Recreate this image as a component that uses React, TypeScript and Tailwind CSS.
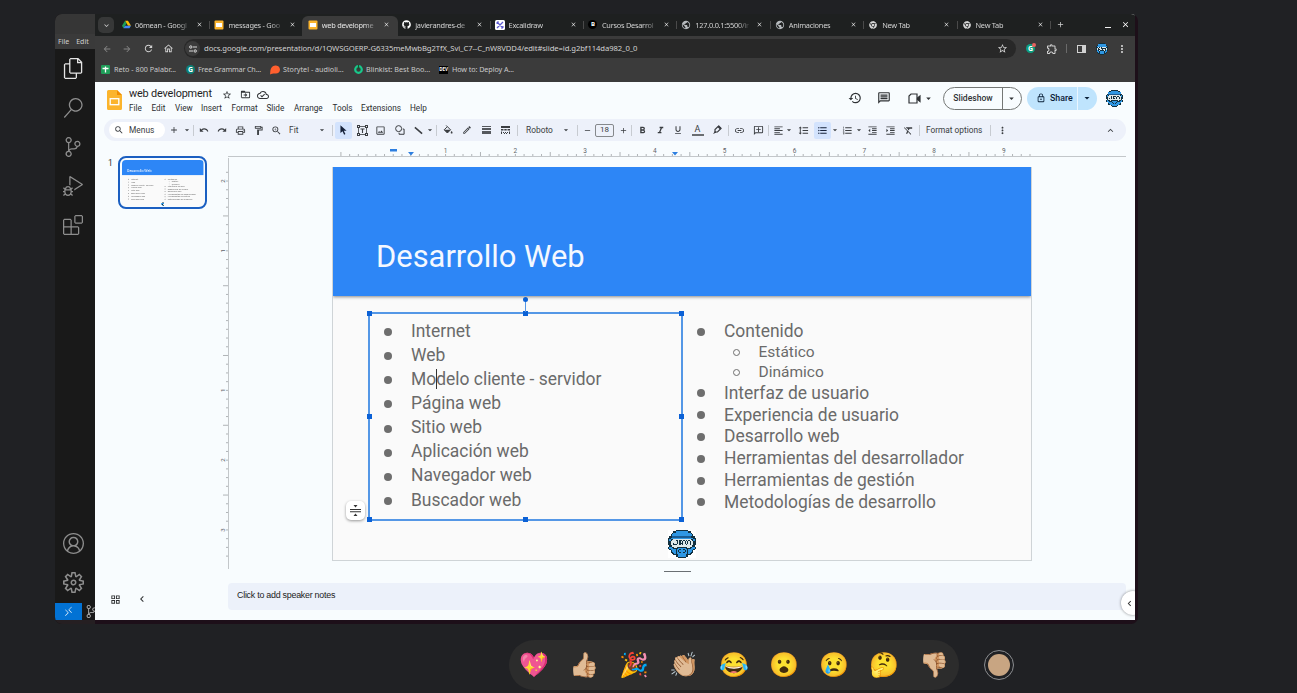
import React from "react";
import {
  MdHistory, MdOutlineComment, MdArrowDropDown, MdSearch, MdAdd, MdRemove,
  MdUndo, MdRedo, MdOutlinePrint, MdOutlineFormatPaint, MdZoomIn, MdOutlineImage,
  MdOutlineEdit, MdFormatBold, MdFormatItalic, MdFormatUnderlined, MdLink,
  MdOutlineAddComment, MdFormatAlignLeft, MdFormatLineSpacing, MdFormatListBulleted,
  MdFormatListNumbered, MdFormatIndentDecrease, MdFormatIndentIncrease, MdFormatClear, MdMoreVert,
  MdKeyboardArrowUp, MdKeyboardArrowDown, MdKeyboardArrowLeft, MdStarOutline, MdDriveFileMoveOutline,
  MdOutlineCloudDone, MdArrowBack, MdArrowForward, MdRefresh, MdOutlineHome, MdClose, MdPublic,
  MdOutlineExtension, MdLockOutline, MdOutlineGridView,
} from "react-icons/md";
import {
  VscFiles, VscSearch, VscSourceControl, VscDebugAlt, VscExtensions, VscAccount, VscSettingsGear, VscRemote,
} from "react-icons/vsc";
import { FaGithub, FaChrome } from "react-icons/fa";

const HELMET = [
  "......kkkkkkkkkk......",
  "....kkbbbbbbbbbbkk....",
  "...kbbbbbbbbbbbbbbk...",
  "..kbbbbbbbbbbbbbbbbk..",
  "..kbbbbbbbbbbbbbbbbk..",
  ".kkdddddddddddddddkkk.",
  "kkbbbbbbbbbbbbbbbbbbkk",
  "kbkkwwwwwwwwwwwwwwkkbk",
  "kbkwwwkkwkkwkwkwkwwkbk",
  "kkwwwwwkwkwkwkwkwkwwkk",
  "kkwwkwwkwkkkwkwkwkwwkk",
  "kkwwkkkwwkwkwwkwwkwwkk",
  ".kkwwwwwwwwwwwwwwwwkk.",
  "kbbkkwwkkkkkkkkwwkkbbk",
  "kbbbkkkkbbbbbbkkkkbbbk",
  ".kbbbbkbbkbbkbbkbbbbk.",
  "..kbbbkbkbbbbkbkbbbk..",
  "..kkbbkbbkbbkbbkbbkk..",
  "...kkbkbbbbbbbbkbkk...",
  "....kkkkbbbbbbkkkk....",
  "......kkbbbbbbkk......",
  "........kkkkkk........",
];
const HELMET_COLORS: Record<string, string> = { k: "#12303f", b: "#2f97e3", d: "#1a5c92", w: "#dfe9ea" };

/* Neighbouring cells of one colour are merged into a single bar. */
function Helmet({ className }: { className: string }) {
  const bars: React.ReactNode[] = [];
  HELMET.forEach((row, y) => {
    for (let x = 0; x < row.length; ) {
      let end = x + 1;
      while (end < row.length && row[end] === row[x]) end++;
      if (row[x] !== ".") {
        bars.push(<rect key={`${x}-${y}`} x={x} y={y} width={end - x} height="1" fill={HELMET_COLORS[row[x]]} />);
      }
      x = end;
    }
  });
  return (
    <svg viewBox="0 0 22 22" className={className} shapeRendering="crispEdges">
      {bars}
    </svg>
  );
}

function SlidesLogo({ className }: { className: string }) {
  return (
    <svg viewBox="0 0 15 20" className={className}>
      <path d="M1.500 0H10l5 5v13.500a1.500 1.500 0 0 1-1.500 1.500h-12A1.500 1.500 0 0 1 0 18.500v-17A1.500 1.500 0 0 1 1.500 0z" fill="#fbb42c" />
      <path d="M10 0l5 5h-5z" fill="#f08c00" />
      <rect x="3.200" y="8.700" width="8.600" height="6" fill="none" stroke="#fff" strokeWidth="1.300" />
    </svg>
  );
}

const slidesFav = (
  <svg viewBox="0 0 10 10" className="size-[10px]">
    <rect x="0.500" y="0.500" width="9" height="9" rx="1" fill="#fbb42c" />
    <rect x="2" y="3" width="6" height="4" fill="#fff" />
  </svg>
);
const driveFav = (
  <svg viewBox="0 0 24 22" className="size-[9px]">
    <path d="M8 1h8l8 13h-8z" fill="#fbbc04" />
    <path d="M8 1L0 14l4 7 8-13z" fill="#1e9d57" />
    <path d="M8 14h16l-4 7H4z" fill="#4285f4" />
  </svg>
);
const excaliFav = (
  <svg viewBox="0 0 10 10" className="size-[10px]">
    <rect width="10" height="10" rx="1.500" fill="#fff" />
    <path d="M2 2l6 6M8 2L2 8M1.500 3.500l2-2M6.500 8.500l2-2" stroke="#5b57d1" strokeWidth="1.300" />
  </svg>
);
const cursosFav = (
  <span className="flex size-[9px] items-center justify-center rounded-full bg-black text-[6px] font-bold text-white">B</span>
);
const globeFav = <MdPublic className="size-[10px] text-[#b6babd]" />;
const chromeFav = <FaChrome className="size-[8px] text-[#d5d5d5]" />;

const TABS: { label: string; icon: React.ReactNode; active?: boolean; line?: boolean }[] = [
  { label: "06mean - Googl", icon: driveFav, line: true },
  { label: "messages - Goo", icon: slidesFav },
  { label: "web developme", icon: slidesFav, active: true },
  { label: "javierandres-de", icon: <FaGithub className="size-[9px] text-white" />, line: true },
  { label: "Excalidraw", icon: excaliFav, line: true },
  { label: "Cursos Desarrol", icon: cursosFav, line: true },
  { label: "127.0.0.1:5500/ir", icon: globeFav, line: true },
  { label: "Animaciones", icon: globeFav, line: true },
  { label: "New Tab", icon: chromeFav, line: true },
  { label: "New Tab", icon: chromeFav, line: true },
];

function TabStrip() {
  return (
    <div className="flex h-[22px] items-center bg-[#1e2020] text-[#d2d2d2]">
      <div className="ml-[3px] flex size-[16px] items-center justify-center rounded-[5px] bg-[#373838]">
        <MdKeyboardArrowDown className="size-[9px]" />
      </div>
      <div className="ml-[4px] flex h-full items-end">
        {TABS.map((t, i) => (
          <div
            key={i}
            className={
              t.active
                ? "-ml-[3px] flex h-[20px] w-[96.400px] items-center rounded-t-[6px] bg-[#3b3b3b] pb-[3px] pl-[3px] text-[#e3e3e3]"
                : "flex h-[20px] w-[93.400px] items-center pb-[3px]"
            }
          >
            <span className="ml-[3px] flex w-[10px] justify-center">{t.icon}</span>
            <span className="ml-[4px] w-[57px] text-[7.400px] leading-[12px] tracking-[-0.260px] whitespace-nowrap [mask-image:linear-gradient(to_right,black_75%,transparent_98%)]">
              {t.label}
            </span>
            <MdClose className="ml-[4px] size-[7px] text-[#e0e0e0]" />
            {t.line && <span className="mr-px ml-auto h-[8px] w-px bg-[#4a4a4a]" />}
          </div>
        ))}
      </div>
      <MdAdd className="-mt-px ml-[4px] size-[9px]" />
      <span className="mt-[4px] ml-[40px] h-px w-[6px] bg-[#f0f0f0]" />
      <MdClose className="-mt-px ml-[10px] size-[9px] text-white" />
    </div>
  );
}

function AddressRow() {
  return (
    <div className="flex h-[25px] items-center bg-[#3b3b3b] text-[#d2d2d2]">
      <MdArrowBack className="ml-[7px] size-[10px] text-[#858585]" />
      <MdArrowForward className="ml-[10px] size-[10px] text-[#858585]" />
      <MdRefresh className="ml-[11px] size-[11px]" />
      <MdOutlineHome className="ml-[9px] size-[11px]" />
      <div className="ml-[10px] flex h-[19px] w-[832px] items-center rounded-full bg-[#282828]">
        <span className="ml-px flex size-[15px] items-center justify-center rounded-full bg-[#3b3b3b]">
          <svg viewBox="0 0 8 8" className="size-[8px]" fill="none" stroke="#dadada" strokeWidth="1">
            <circle cx="1.800" cy="2" r="1.200" />
            <path d="M4 2h4M0 6h4" />
            <circle cx="6.200" cy="6" r="1.200" />
          </svg>
        </span>
        <span className="ml-[4px] text-[7.700px] leading-none tracking-[-0.095px] whitespace-nowrap">
          docs.google.com/presentation/d/1QWSGOERP-G6335meMwbBg2TfX_Svi_C7--C_nW8VDD4/edit#slide=id.g2bf114da982_0_0
        </span>
        <MdStarOutline className="mr-[8px] ml-auto size-[11px]" />
      </div>
      <span className="relative ml-[10px] flex size-[9px] items-center justify-center rounded-full bg-[#0d9e80] text-[7px] leading-none font-bold text-white">
        G
        <span className="absolute -top-px -right-px size-[4px] rounded-full bg-[#e9625f]" />
      </span>
      <MdOutlineExtension className="ml-[11px] size-[12px]" />
      <span className="ml-[8px] h-[9px] w-px bg-[#6a6a6a]" />
      <svg viewBox="0 0 9 8" className="ml-[10px] h-[8px] w-[9px]">
        <rect x="0.500" y="0.500" width="8" height="7" fill="none" stroke="#d2d2d2" />
        <rect x="5" y="0.500" width="3.500" height="7" fill="#d2d2d2" />
      </svg>
      <Helmet className="ml-[10px] size-[12px]" />
      <MdMoreVert className="ml-[8px] size-[12px]" />
    </div>
  );
}

function Bookmarks() {
  const text = "text-[7.200px] leading-none whitespace-nowrap";
  return (
    <div className="flex h-[21px] items-center bg-[#3b3b3b] pb-[4px] text-[#cacaca]">
      <div className="flex w-[85px] items-center pl-[6px]">
        <svg viewBox="0 0 9 9" className="size-[9px]">
          <rect width="9" height="9" rx="1" fill="#1f9e59" />
          <path d="M1.500 3.500h6M4.500 1.500v6" stroke="#fff" strokeWidth="1.300" />
        </svg>
        <span className={`${text} ml-[4px]`}>Reto - 800 Palabr...</span>
      </div>
      <div className="flex w-[85px] items-center pl-[6px]">
        <span className="flex size-[9px] items-center justify-center rounded-full bg-[#0b7f76] text-[7px] leading-none font-bold text-white">G</span>
        <span className={`${text} ml-[3px] tracking-[-0.150px]`}>Free Grammar Ch...</span>
      </div>
      <div className="flex w-[84px] items-center pl-[5px]">
        <svg viewBox="0 0 10 10" className="size-[10px]">
          <path d="M0 9.500C.5 7 0 5.500 1 3.500 2 1.200 4 .3 6 .5c2.500.2 4 2 4 4.200C10 7 8 8.800 5.500 8.600 3.500 8.500 2 8.600 0 9.500z" fill="#ff5f2e" />
        </svg>
        <span className={`${text} ml-[3px]`}>Storytel - audioli...</span>
      </div>
      <div className="flex w-[84px] items-center pl-[5px]">
        <svg viewBox="0 0 9 9" className="size-[9px]">
          <circle cx="4.500" cy="4.500" r="3.300" fill="none" stroke="#18c98b" strokeWidth="2.200" />
          <path d="M4.500 0v4" stroke="#14532d" strokeWidth="1.200" />
        </svg>
        <span className={`${text} ml-[3px]`}>Blinkist: Best Boo...</span>
      </div>
      <div className="flex items-center pl-[6px]">
        <span className="flex h-[8px] w-[9px] items-center justify-center bg-black text-[4.500px] font-bold text-white">DEV</span>
        <span className={`${text} ml-[4px] tracking-[-0.080px]`}>How to: Deploy A...</span>
      </div>
    </div>
  );
}

function DocsHeader() {
  return (
    <div className="flex h-[37px] items-start text-[#303336]">
      <SlidesLogo className="mt-[8px] ml-[12px] h-[20px] w-[15px]" />
      <div className="ml-[7px] pt-[6px]">
        <div className="flex h-[13px] items-center">
          <span className="w-[93px] text-[10.900px] leading-none tracking-[-0.180px] whitespace-nowrap text-[#1f1f1f]">web development</span>
          <MdStarOutline className="size-[10px]" />
          <MdDriveFileMoveOutline className="ml-[8px] size-[11px]" />
          <MdOutlineCloudDone className="ml-[6px] size-[12px]" />
        </div>
        <div className="mt-px flex h-[12px] items-center text-[8.200px] leading-none text-[#2b2d30]">
          <span className="w-[22.500px]">File</span>
          <span className="w-[23.500px]">Edit</span>
          <span className="w-[26px]">View</span>
          <span className="w-[30.500px]">Insert</span>
          <span className="w-[35px]">Format</span>
          <span className="w-[27.500px]">Slide</span>
          <span className="w-[38.500px]">Arrange</span>
          <span className="w-[28.500px]">Tools</span>
          <span className="w-[49px]">Extensions</span>
          <span>Help</span>
        </div>
      </div>
      <div className="mt-[4px] mr-[12px] ml-auto flex h-[24px] items-center">
        <MdHistory className="size-[14px]" />
        <MdOutlineComment className="ml-[15px] size-[14px] -scale-x-100" />
        <svg viewBox="0 0 13 11" className="ml-[17px] h-[11px] w-[13px]" fill="none" stroke="#303336" strokeWidth="1.200">
          <path d="M3 1h6v9H1V3z" />
          <path d="M9.500 5l2.500-2v5.500L9.500 6.500z" fill="#303336" />
        </svg>
        <MdArrowDropDown className="ml-[2px] size-[11px]" />
        <div className="ml-[9px] flex h-[23px] w-[79px] items-center rounded-full border border-[#747775]">
          <span className="flex w-[58px] justify-center text-[8.600px] leading-none font-medium">Slideshow</span>
          <span className="h-full w-px bg-[#747775]" />
          <MdArrowDropDown className="ml-[3px] size-[11px]" />
        </div>
        <div className="ml-[5px] flex h-[23px] w-[70px] items-center rounded-full bg-[#bfe4fd] text-[#0b2038]">
          <MdLockOutline className="ml-[9px] size-[10px]" />
          <span className="ml-[4px] w-[27px] text-[8.800px] leading-none font-medium">Share</span>
          <span className="h-full w-px bg-[#eaf6ff]" />
          <MdArrowDropDown className="ml-[3px] size-[12px]" />
        </div>
        <Helmet className="ml-[9px] size-[17px]" />
      </div>
    </div>
  );
}

function Caret({ className }: { className: string }) {
  return (
    <span className={`flex h-full shrink-0 items-center justify-center ${className}`}>
      <MdArrowDropDown className="size-[10px] shrink-0" />
    </span>
  );
}
function Sep({ className }: { className: string }) {
  return <span className={`h-[11px] w-px shrink-0 bg-[#c7cbd1] ${className}`} />;
}
function I({ className, children }: { className: string; children: React.ReactNode }) {
  return <span className={`flex h-full w-[12px] shrink-0 items-center justify-center text-[11px] ${className}`}>{children}</span>;
}

function Toolbar() {
  return (
    <div className="mr-[9px] ml-[9px] flex h-[22px] shrink-0 items-center rounded-full bg-[#edf1fa] text-[#3a3d41]">
      <div className="ml-[5px] flex h-[16px] w-[56px] shrink-0 items-center rounded-full bg-white">
        <MdSearch className="ml-[5px] size-[10px]" />
        <span className="ml-[5px] text-[8.400px] leading-none">Menus</span>
      </div>
      <MdAdd className="ml-[4px] size-[10px] shrink-0" />
      <Caret className="ml-[4px] w-[8px]" />
      <Sep className="ml-[2px]" />
      <I className="ml-[4px]"><MdUndo className="size-[10px]" /></I>
      <I className="ml-[6px]"><MdRedo className="size-[10px]" /></I>
      <I className="ml-[6px]"><MdOutlinePrint /></I>
      <I className="ml-[6px]"><MdOutlineFormatPaint /></I>
      <I className="ml-[6px]"><MdZoomIn /></I>
      <span className="ml-[7px] w-[10px] shrink-0 text-[8.400px] leading-none">Fit</span>
      <Caret className="ml-[19px] w-[8px]" />
      <Sep className="ml-[6px]" />
      <span className="ml-[2px] flex h-[17px] w-[17px] shrink-0 items-center justify-center rounded-[2px] bg-[#d3e3fd]">
        <svg viewBox="0 0 8 11" className="h-[10px] w-[7px]">
          <path d="M0.500 0l7 6.300H4.300l1.900 3.700-1.500.8L2.900 7 .5 9z" fill="#16223a" />
        </svg>
      </span>
      <I className="ml-[4px]">
        <svg viewBox="0 0 11 11" className="size-[11px]" fill="none" stroke="#3a3d41">
          <rect x="1.500" y="1.500" width="8" height="8" strokeWidth="0.800" />
          <path d="M3.500 4h4M5.500 4v4" strokeWidth="1.100" />
          <path d="M0 0h3v3H0zM8 0h3v3H8zM0 8h3v3H0zM8 8h3v3H8z" fill="#3a3d41" stroke="none" />
          <path d="M1 1h1v1H1zM9 1h1v1H9zM1 9h1v1H1zM9 9h1v1H9z" fill="#edf1fa" stroke="none" />
        </svg>
      </I>
      <I className="ml-[6px]"><MdOutlineImage /></I>
      <I className="ml-[8px]">
        <svg viewBox="0 0 11 11" className="size-[10px]" fill="none" stroke="#3a3d41" strokeWidth="1.100">
          <circle cx="4" cy="4" r="3.300" />
          <path d="M8.500 4.500H10v5.700H4.500V8.500" />
        </svg>
      </I>
      <I className="ml-[6px]">
        <svg viewBox="0 0 10 10" className="size-[9px]"><path d="M1 1.500l8 7" stroke="#3a3d41" strokeWidth="1.700" /></svg>
      </I>
      <Caret className="ml-[2px] w-[8px]" />
      <Sep className="ml-[2px]" />
      <I className="ml-[5px]">
        <svg viewBox="0 0 11 11" className="size-[10px]">
          <path d="M3.500.5l4.800 4.800L4.800 8.800 1.300 5.300l3-3" fill="none" stroke="#3a3d41" strokeWidth="1.100" />
          <path d="M1.300 5.300h7L4.800 8.800zM9.500 6.500c.8 1 1 1.400 1 1.900a1 1 0 0 1-2 0c0-.5.3-.9 1-1.900z" fill="#3a3d41" />
        </svg>
      </I>
      <I className="ml-[7px]"><MdOutlineEdit className="size-[10px]" /></I>
      <I className="ml-[7px]">
        <svg viewBox="0 0 9 8" className="h-[8px] w-[9px]" fill="#3a3d41">
          <path d="M0 0h9v1H0zM0 2h9v2H0zM0 5h9v3H0z" opacity="0.850" />
        </svg>
      </I>
      <I className="ml-[7px]">
        <svg viewBox="0 0 9 8" className="h-[8px] w-[9px]" fill="#3a3d41">
          <path d="M0 0h9v2H0zM0 3h2.500v1.500H0zM3.300 3h2.400v1.500H3.300zM6.500 3H9v1.500H6.500zM0 5.500h1V8H0zM2 6h1v1H2zM4 6h1v1H4zM6 6h1v1H6zM8 5.500h1V8H8zM3 7h1v1H3zM5 7h1v1H5z" />
        </svg>
      </I>
      <Sep className="ml-[6px]" />
      <span className="ml-[8px] w-[27px] shrink-0 text-[8.400px] leading-none">Roboto</span>
      <Caret className="ml-[9px] w-[8px]" />
      <Sep className="ml-[7px]" />
      <MdRemove className="ml-[5px] size-[9px] shrink-0" />
      <span className="ml-[3px] flex h-[13px] w-[19px] shrink-0 items-center justify-center rounded-[2px] border border-[#85888c] text-[8px] leading-none">18</span>
      <MdAdd className="ml-[5px] size-[9px] shrink-0" />
      <Sep className="ml-[3px]" />
      <I className="ml-[4px]"><MdFormatBold /></I>
      <I className="ml-[6px]"><MdFormatItalic /></I>
      <I className="ml-[6px]"><MdFormatUnderlined className="size-[10px]" /></I>
      <span className="ml-[7px] flex w-[13px] shrink-0 flex-col items-center text-[9px] leading-[9px]">
        A
        <span className="h-[2px] w-[12px] bg-[#6a6d71]" />
      </span>
      <I className="ml-[7px]">
        <svg viewBox="0 0 10 10" className="size-[10px]" fill="none" stroke="#3a3d41" strokeWidth="1.200">
          <path d="M6.500 1L9 3.500 5.500 7H3V4.500z" />
          <path d="M5.500 2L8 4.500l1.500-1.500L7 .5zM1 9l2-3 1.500 1.500z" fill="#3a3d41" stroke="none" />
        </svg>
      </I>
      <Sep className="ml-[5px]" />
      <I className="ml-[4px]"><MdLink /></I>
      <I className="ml-[7px]"><MdOutlineAddComment className="-scale-x-100" /></I>
      <Sep className="ml-[4px]" />
      <I className="ml-[3px]"><MdFormatAlignLeft /></I>
      <Caret className="ml-px w-[8px]" />
      <I className="ml-[4px]"><MdFormatLineSpacing /></I>
      <span className="ml-[5px] flex h-[17px] w-[17px] shrink-0 items-center justify-center rounded-[2px] bg-[#d3e3fd] text-[11px] text-[#16223a]">
        <MdFormatListBulleted />
      </span>
      <Caret className="w-[7px]" />
      <I className="ml-[3px]"><MdFormatListNumbered /></I>
      <Caret className="ml-[2px] w-[8px]" />
      <I className="ml-[3px]"><MdFormatIndentDecrease /></I>
      <I className="ml-[6px]"><MdFormatIndentIncrease /></I>
      <I className="ml-[6px]"><MdFormatClear /></I>
      <Sep className="ml-[5px]" />
      <span className="ml-[6px] w-[57px] shrink-0 text-[8.300px] leading-none whitespace-nowrap">Format options</span>
      <Sep className="ml-[7px]" />
      <I className="ml-[5px]"><MdMoreVert /></I>
      <I className="mr-[10px] ml-auto"><MdKeyboardArrowUp /></I>
    </div>
  );
}

const UNIT = 69.78;

/* Horizontal ruler: the origin of the scale lies 155.8px right of the svg's left edge. */
function HorizontalRuler() {
  const ticks: React.ReactNode[] = [];
  for (let i = -4; i <= 75; i++) {
    const x = 155.8 + (i * UNIT) / 8;
    if (x > 812) break;
    ticks.push(<path key={i} d={`M${x} ${i % 4 === 0 && i % 8 !== 0 ? 11 : 13}V15`} stroke="#9da1a5" strokeWidth="0.800" />);
  }
  return (
    <svg viewBox="0 0 906 17" className="h-[17px] w-[906px] shrink-0">
      <path d="M8 15.500H906" stroke="#c3c7ca" />
      {ticks}
      {[1, 2, 3, 4, 5, 6, 7, 8, 9].map((n) => (
        <text key={n} x={155.8 + n * UNIT} y="12" textAnchor="middle" fontSize="6.500" fill="#5f6368">{n}</text>
      ))}
      <rect x="170" y="8" width="7" height="2.500" fill="#2d7fe0" />
      <path d="M188 11h6l-3 3.500zM452 11h6l-3 3.500z" fill="#2d7fe0" />
    </svg>
  );
}

function VerticalRuler() {
  const ticks: React.ReactNode[] = [];
  for (let i = -17; i <= 27; i++) {
    const y = 162.6 + (i * UNIT) / 8;
    ticks.push(<path key={i} d={`M${i % 4 === 0 && i % 8 !== 0 ? 3 : 6} ${y}H8`} stroke="#9da1a5" strokeWidth="0.800" />);
  }
  return (
    <svg viewBox="0 0 9 411" className="h-[411px] w-[9px] shrink-0">
      <path d="M8.500 0V411" stroke="#c3c7ca" />
      {ticks}
      {[-2, -1, 1, 2, 3].map((n) => (
        <text key={n} transform={`translate(4.500 ${162.6 + n * UNIT}) rotate(-90)`} textAnchor="middle" fontSize="6" fill="#5f6368">
          {Math.abs(n)}
        </text>
      ))}
    </svg>
  );
}

const LEFT = ["Internet", "Web", "Modelo cliente - servidor", "Página web", "Sitio web", "Aplicación web", "Navegador web", "Buscador web"];
const RIGHT = ["Interfaz de usuario", "Experiencia de usuario", "Desarrollo web", "Herramientas del desarrollador", "Herramientas de gestión", "Metodologías de desarrollo"];

function RightRow({ text }: { text: string }) {
  return (
    <li className="flex h-[21.800px] items-center">
      <span className="size-[8px] rounded-full bg-[#6e6e6e]" />
      <span className="ml-[19px]">{text}</span>
    </li>
  );
}

function SlideContent() {
  return (
    <div className="relative h-[393px] w-[698px] overflow-hidden bg-[#fafafa] text-[#6a6a6a]">
      <div className="h-[128.500px] bg-[#2d86f6] pt-[71px] pl-[43px] shadow-[0_1px_3px_rgba(0,0,0,0.450)]">
        <span className="text-[30.900px] leading-[38px] whitespace-nowrap text-[#f4f8ff]">Desarrollo Web</span>
      </div>
      <ul className="absolute top-[152.600px] left-[51px] text-[17.450px] leading-none whitespace-nowrap">
        {LEFT.map((t) => (
          <li key={t} className="flex h-[24.100px] items-center">
            <span className="mt-px size-[8px] rounded-full bg-[#6e6e6e]" />
            <span className="ml-[19px]">{t}</span>
          </li>
        ))}
      </ul>
      <ul className="absolute top-[154.200px] left-[364px] text-[17.450px] leading-none whitespace-nowrap">
        <RightRow text="Contenido" />
        {["Estático", "Dinámico"].map((t) => (
          <li key={t} className="flex h-[19.800px] items-center text-[15.500px]">
            <span className="ml-[36px] size-[7px] rounded-full border border-[#6e6e6e]" />
            <span className="ml-[18.500px]">{t}</span>
          </li>
        ))}
        {RIGHT.map((t) => <RightRow key={t} text={t} />)}
      </ul>
      <div className="absolute top-[363px] left-[335px] bg-white"><Helmet className="size-[28px]" /></div>
    </div>
  );
}

function Selection() {
  const h = "absolute size-[5px] bg-[#0b61d6]";
  return (
    <div className="absolute top-[145px] left-[35px] h-[209px] w-[315px] border-2 border-[#5497e6]">
      <span className={`${h} -top-[3px] -left-[3px]`} />
      <span className={`${h} -top-[3px] left-[153px]`} />
      <span className={`${h} -top-[3px] -right-[3px]`} />
      <span className={`${h} top-[100px] -left-[3px]`} />
      <span className={`${h} top-[100px] -right-[3px]`} />
      <span className={`${h} -bottom-[3px] -left-[3px]`} />
      <span className={`${h} -bottom-[3px] left-[153px]`} />
      <span className={`${h} -right-[3px] -bottom-[3px]`} />
      <span className="absolute -top-[14px] left-[155px] h-[12px] w-px bg-[#5497e6]" />
      <span className="absolute -top-[17px] left-[153px] size-[5px] rounded-full bg-[#0b61d6]" />
      <span className="absolute top-[55px] left-[66px] h-[20px] w-px bg-[#333]" />
    </div>
  );
}

function Editor() {
  return (
    <div className="relative flex h-[479px] overflow-hidden">
      <div className="flex w-[125px] shrink-0 flex-col">
        <div className="mt-[15px] flex">
          <span className="mt-[2px] ml-[13px] w-[9px] text-[8.500px] leading-[10px] text-[#333]">1</span>
          <div className="ml-px h-[53px] w-[89px] rounded-[8px] border-2 border-[#1b5fc1] p-[2px]">
            <div className="h-[46px] w-[82px] overflow-hidden rounded-[4px]">
              <div className="h-[393px] w-[698px] origin-top-left scale-[0.117]"><SlideContent /></div>
            </div>
          </div>
        </div>
        <div className="mt-auto mb-[15px] flex items-center text-[#2d2f31]">
          <MdOutlineGridView className="ml-[15px] size-[11px]" />
          <MdKeyboardArrowLeft className="ml-[15px] size-[12px]" />
        </div>
      </div>
      <div className="flex flex-col">
        <HorizontalRuler />
        <div className="flex h-[411px]">
          <VerticalRuler />
          <div className="pt-[9px] pl-[103px]">
            <div className="relative border border-t-0 border-[#cfd4d7]">
              <SlideContent />
              <Selection />
              <span className="absolute top-[334px] left-[13px] flex size-[19px] items-center justify-center rounded-[5px] bg-white shadow-[0_1px_3px_rgba(0,0,0,0.400)]">
                <svg viewBox="0 0 11 11" className="size-[11px]" fill="#333">
                  <path d="M3.500 0h4l-2 2.500zM3.500 11h4l-2-2.500zM0 4h11v1H0zM0 6.200h11v1H0z" />
                </svg>
              </span>
            </div>
            <div className="mt-[10px] ml-[332px] h-px w-[27px] bg-[#6a6f73]" />
          </div>
        </div>
        <div className="mt-[14px] ml-[8px] flex h-[27px] w-[898px] items-center rounded-[4px] bg-[#ecf1fa] pb-[3px] pl-[9px] font-['Liberation_Sans',sans-serif] text-[8.900px] leading-none tracking-[-0.250px] text-[#222]">
          Click to add speaker notes
        </div>
      </div>
      <div className="absolute top-[450px] left-[1026px] flex size-[24px] items-center rounded-full bg-white pl-[3px] shadow-[0_0_3px_rgba(0,0,0,0.450)]">
        <MdKeyboardArrowLeft className="size-[11px] text-[#333]" />
      </div>
    </div>
  );
}

function CodeSidebar() {
  return (
    <div className="flex w-[40px] shrink-0 flex-col overflow-hidden bg-[#191919] text-[#8d8d8d]">
      <div className="h-[20px] bg-[#363636]" />
      <div className="flex h-[15px] items-center gap-[7px] bg-[#3a3a3a] pl-[3px] font-['Noto_Sans',sans-serif] text-[7px] leading-none text-[#d0d0d0]">
        <span>File</span>
        <span>Edit</span>
      </div>
      <div className="flex flex-col items-start gap-[19px] pt-[9px] pl-[8px]">
        <VscFiles className="size-[21px] text-[#e4e4e4]" />
        <VscSearch className="size-[20px]" />
        <VscSourceControl className="size-[20px]" />
        <VscDebugAlt className="size-[20px]" />
        <VscExtensions className="size-[20px]" />
      </div>
      <div className="mt-auto flex flex-col gap-[18px] pb-[10px] pl-[8px]">
        <VscAccount className="size-[21px]" />
        <VscSettingsGear className="size-[21px]" />
      </div>
      <div className="flex h-[17px] items-center">
        <span className="flex h-full w-[27px] shrink-0 items-center justify-center bg-[#0272d4] text-white"><VscRemote className="size-[11px]" /></span>
        <VscSourceControl className="ml-[3px] size-[13px] shrink-0 text-[#c8c8c8]" />
      </div>
      <div className="h-[4px] bg-[#251f22]" />
    </div>
  );
}

function Reactions() {
  return (
    <div className="mt-[16px] ml-[509px] flex h-[50px] items-center">
      <div className="flex h-[50px] w-[450px] items-center rounded-full bg-[#2c2c2c] font-['Noto_Color_Emoji',sans-serif] text-[24px] leading-none">
        {["💖", "👍🏼", "🎉", "👏🏼", "😂", "😮", "😢", "🤔", "👎🏼"].map((e) => (
          <span key={e} className="flex w-[50px] justify-center">{e}</span>
        ))}
      </div>
      <span className="ml-[25px] flex size-[30px] items-center justify-center rounded-full border-[1.500px] border-[#8b8d90]">
        <span className="size-[22px] rounded-full bg-[#c8a582]" />
      </span>
    </div>
  );
}

export default function App() {
  return (
    <div className="h-[693px] w-[1297px] overflow-hidden bg-[#202124] pt-[14px] font-['Roboto',sans-serif]">
      <div className="ml-[55px] flex h-[610px] w-[1083px] overflow-hidden rounded-[7px] bg-[#1d0f19]">
        <CodeSidebar />
        <div className="flex h-[606px] w-[1040px] shrink-0 flex-col overflow-hidden bg-[#f8fcfe]">
          <div className="font-['Noto_Sans',sans-serif]">
            <TabStrip />
            <AddressRow />
            <Bookmarks />
          </div>
          <DocsHeader />
          <Toolbar />
          <Editor />
        </div>
      </div>
      <Reactions />
    </div>
  );
}
